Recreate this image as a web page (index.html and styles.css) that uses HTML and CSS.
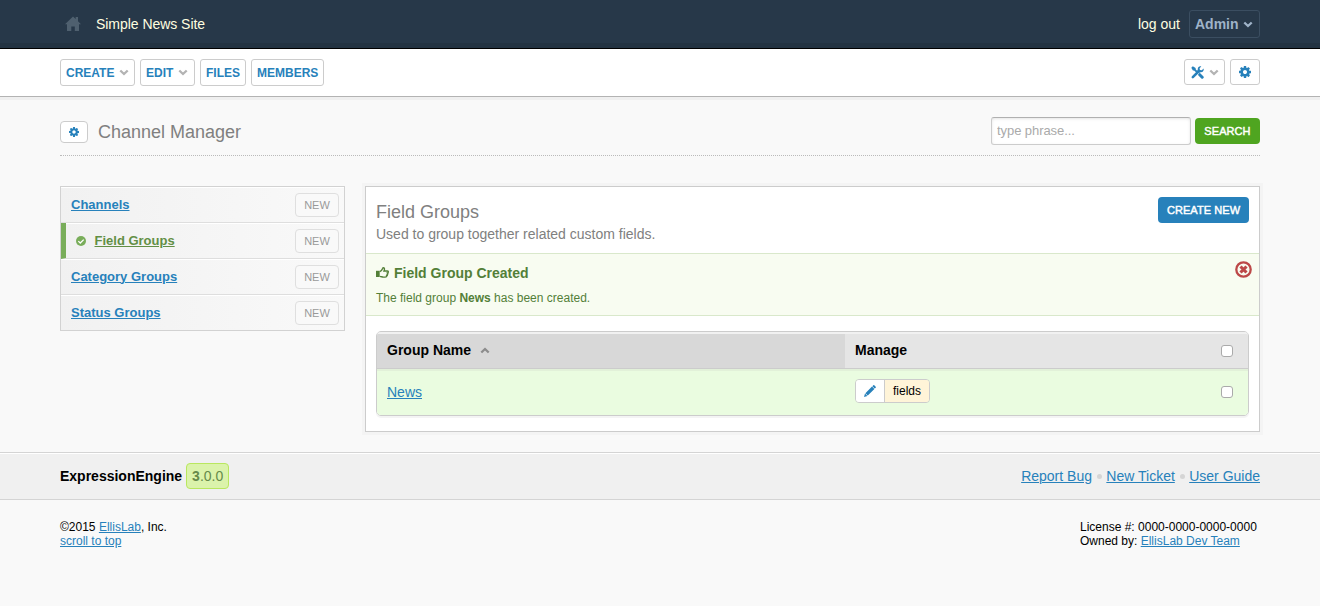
FILE: index.html
```html
<!DOCTYPE html>
<html lang="en">
<head>
<meta charset="utf-8">
<title>Channel Manager</title>
<link rel="stylesheet" href="styles.css">
</head>
<body>
<svg class="defs" width="0" height="0" aria-hidden="true">
  <symbol id="cog" viewBox="128 128 1536 1536"><path d="M1152 896q0-106-75-181t-181-75-181 75-75 181 75 181 181 75 181-75 75-181zm512-109v222q0 12-8 23t-20 13l-185 28q-19 54-39 91 35 50 107 138 10 12 10 25t-9 23q-27 37-99 108t-94 71q-12 0-26-9l-138-108q-44 23-91 38-16 136-29 186-7 28-36 28h-222q-14 0-24.500-8.500t-11.500-21.500l-28-184q-49-16-90-37l-141 107q-10 9-25 9-14 0-25-11-126-114-165-168-7-10-7-23 0-12 8-23 15-21 51-66.500t54-70.500q-27-50-41-99l-183-27q-13-2-21-12.500t-8-23.500v-222q0-12 8-23t19-13l186-28q14-46 39-92-40-57-107-138-10-12-10-24 0-10 9-23 26-36 98.500-107.500t94.500-71.500q13 0 26 10l138 107q44-23 91-38 16-136 29-186 7-28 36-28h222q14 0 24.500 8.500t11.500 21.500l28 184q49 16 90 37l142-107q9-9 24-9 13 0 25 10 129 119 165 170 7 8 7 22 0 12-8 23-15 21-51 66.500t-54 70.500q26 50 41 98l183 28q13 2 21 12.500t8 23.500z"/></symbol>
  <symbol id="chevron" viewBox="0 0 10 7"><path d="M1.300 1.500 5 5 8.700 1.500" fill="none" stroke="currentColor" stroke-width="2.300"/></symbol>
</svg>

<header class="topbar">
  <div class="wrap bar">
    <a class="home"><svg width="16" height="16" viewBox="0 0 16 16"><path d="M8 .5 10.700 3V1h2.300v4.200L16 8.300h-2V15H9.800v-4.500H6.300V15H2V8.300H0z"/></svg></a>
    <a class="site">Simple News Site</a>
    <a class="logout">log out</a>
    <a class="admin">Admin <svg width="10" height="7"><use href="#chevron"/></svg></a>
  </div>
</header>

<nav class="nav">
  <div class="wrap nav-row">
    <a class="btn create">CREATE <svg width="10" height="7"><use href="#chevron"/></svg></a>
    <a class="btn edit">EDIT <svg width="10" height="7"><use href="#chevron"/></svg></a>
    <a class="btn files">FILES</a>
    <a class="btn members">MEMBERS</a>
    <a class="btn tools"><svg class="blue" width="13" height="13" viewBox="0 0 13 13"><path d="M1.800 11.200 8 5" stroke="currentColor" stroke-width="2.500" stroke-linecap="round"/><path d="M12.600 2.600 10.800 4.300 8.900 3.900 8.600 2.200 10.300.4C8.300-.2 6.500 1.300 6.800 3.500L6.200 5 8 6.800l1.500-.6c2.200.3 3.600-1.600 3.100-3.600z"/><path d="M2.600 2.600 7 7" stroke="currentColor" stroke-width="1.800"/><path d="M.3 1.700 1.800.2 4.600 1.900v1.500L3.400 4.600H1.900z"/><path d="m8.700 8.700 2.500 2.500" stroke="currentColor" stroke-width="3" stroke-linecap="round"/></svg><svg width="10" height="7"><use href="#chevron"/></svg></a>
    <a class="btn gear"><svg class="blue" width="12" height="12"><use href="#cog"/></svg></a>
  </div>
</nav>

<main class="wrap">
  <div class="page-head">
    <a class="btn small-gear"><svg class="blue" width="10" height="10"><use href="#cog"/></svg></a>
    <h1>Channel Manager</h1>
    <form class="search">
      <input type="text" placeholder="type phrase...">
      <button type="button" class="solid green">SEARCH</button>
    </form>
  </div>

  <div class="columns">
    <ul class="side">
      <li><a class="link">Channels</a><a class="new">NEW</a></li>
      <li class="active"><svg width="10" height="10" viewBox="0 0 10 10"><circle cx="5" cy="5" r="5"/><path d="M2.300 5.100 4.300 7 7.700 3.600" fill="none" stroke="#fff" stroke-width="1.300"/></svg><a class="link">Field Groups</a><a class="new">NEW</a></li>
      <li><a class="link">Category Groups</a><a class="new">NEW</a></li>
      <li><a class="link">Status Groups</a><a class="new">NEW</a></li>
    </ul>

    <section class="panel">
      <div class="panel-head">
        <div>
          <h2>Field Groups</h2>
          <p>Used to group together related custom fields.</p>
        </div>
        <a class="solid primary">CREATE NEW</a>
      </div>
      <div class="alert">
        <div>
          <h3><svg width="13" height="12" viewBox="0 0 13 12"><path d="M0 3.800h3.700v6.200H0z"/><path d="M3.800 4.700C5.600 4 6.200 2.600 6.600 1.500 6.800.8 7 .7 7.500.7c1.300 0 1.100 1.900.5 3.300h3.200c1.500 0 1.400 1.700.3 2 .7.500.4 1.400-.3 1.500.4.700 0 1.200-.6 1.300.2.900-.4 1.300-1.500 1.300H7.500c-1.300 0-2-.5-3.600-.7" fill="none" stroke="currentColor" stroke-width="1.400"/></svg>Field Group Created</h3>
          <p>The field group <b>News</b> has been created.</p>
        </div>
        <svg class="close" width="17" height="17" viewBox="0 0 17 17"><circle cx="8.500" cy="8.500" r="7.200" fill="none" stroke="currentColor" stroke-width="2.300"/><path d="m5.500 5.500 6 6m0-6-6 6" stroke="currentColor" stroke-width="3.100"/></svg>
      </div>
      <div class="table">
        <div class="tr head">
          <div class="td name">Group Name <svg width="10" height="7" viewBox="0 0 10 7"><path d="M1.300 5.500 5 2 8.700 5.500" fill="none" stroke="currentColor" stroke-width="2.300"/></svg></div>
          <div class="td manage">Manage</div>
          <div class="td check"><i class="box"></i></div>
        </div>
        <div class="tr row">
          <div class="td name"><a class="link">News</a></div>
          <div class="td manage"><span class="tool"><span class="pen"><svg width="12" height="12" viewBox="0 0 12 12"><path d="M0 12 1 8.600 3.400 11zM1.400 8.200 8 1.600 10.400 4 3.800 10.600zM8.400 1.200 9.300.3q.5-.4 1 0l1.400 1.400q.4.500 0 1l-.9.900z"/></svg></span><span class="fields">fields</span></span></div>
          <div class="td check"><i class="box"></i></div>
        </div>
      </div>
    </section>
  </div>
</main>

<div class="product">
  <div class="wrap product-row">
    <b>ExpressionEngine</b><span class="version"><b>3</b>.0.0</span>
    <div class="help"><a class="link">Report Bug</a><i class="dot"></i><a class="link">New Ticket</a><i class="dot"></i><a class="link">User Guide</a></div>
  </div>
</div>
<footer class="wrap legal">
  <div>©2015 <a class="link">EllisLab</a>, Inc.<br><a class="link">scroll to top</a></div>
  <div class="license">License #: 0000-0000-0000-0000<br>Owned by: <a class="link">EllisLab Dev Team</a></div>
</footer>
</body>
</html>
```
FILE: styles.css
```css
* { box-sizing: border-box; }
body { margin: 0; background: #f9f9f9; color: #000; font: 14px/18px "Liberation Sans", Arial, sans-serif; }
h1, h2, h3, p, ul { margin: 0; padding: 0; font-weight: normal; }
svg { display: block; fill: currentColor; flex: none; }
.defs { position: absolute; }
.wrap { width: 1200px; margin: 0 auto; }
.link { color: #2781bb; text-decoration: underline; text-underline-offset: 1px; text-decoration-thickness: 1px; }

.topbar { height: 49px; background: #273849; border-bottom: 1px solid #000; box-shadow: inset 0 -5px 0 #233342; }
.bar { display: flex; align-items: center; height: 48px; color: #ffffe0; }
.home { color: #4f606f; margin: 0 15px 0 5px; }
.site { letter-spacing: -.04px; }
.logout { margin-left: auto; margin-right: 9px; }
.admin { display: flex; align-items: center; justify-content: space-between; width: 71px; height: 28px; padding: 0 6px 0 5px; border: 1px solid #3b4e61; border-radius: 3px; color: #9fb3c8; font-weight: bold; }

.nav { height: 51px; background: #fff; border-bottom: 3px solid #efefef; box-shadow: inset 0 -1px 0 #b3b3b3; }
.nav-row { display: flex; gap: 5px; padding-top: 10px; }
.btn { display: flex; align-items: center; justify-content: space-between; height: 27px; padding: 0 5px; border: 1px solid #ccc; border-radius: 3px; background: #fff; color: #2781bb; font-size: 12px; font-weight: bold; white-space: nowrap; }
.btn svg { color: #b3b3b3; }
.btn svg.blue { color: #2781bb; }
.create { width: 75px; }
.edit { width: 55px; padding-right: 6px; }
.files { width: 46px; }
.members { width: 73px; }
.tools { width: 41px; height: 26px; margin-left: auto; padding-left: 6px; }
.gear { width: 30px; height: 26px; justify-content: center; }

.page-head { display: flex; align-items: center; height: 56px; border-bottom: 1px dotted #bbb; padding-top: 8px; }
.small-gear { width: 28px; height: 22px; border-radius: 4px; justify-content: center; margin-right: 10px; }
h1 { font-size: 18px; color: #808080; }
.search { display: flex; align-items: center; gap: 4px; margin: -1px 0 0 auto; }
.search input { width: 200px; height: 28px; padding: 0 5px 1px; border: 1px solid #ccc; border-top-color: #b0b0b0; border-radius: 3px; background: #fff; box-shadow: inset 0 1px 3px #e5e5e5; font: 13px "Liberation Sans", Arial, sans-serif; }
.search input::placeholder { color: #aaa; letter-spacing: -.07px; }
.solid { display: flex; align-items: center; justify-content: center; height: 26px; padding: 0 0 1px; border: 0; border-radius: 4px; color: #fff; font: 11px "Liberation Sans", Arial, sans-serif; letter-spacing: .07px; -webkit-text-stroke: .45px #fff; }
.green { width: 65px; background: #4fa520; }
.primary { width: 91px; background: #2781bb; }

.columns { display: flex; align-items: flex-start; gap: 20px; padding-top: 30px; }
.side { width: 285px; border: 1px solid #d2d2d2; list-style: none; }
.side li { display: flex; align-items: center; height: 36px; padding: 0 5px 0 10px; background: linear-gradient(90deg, #f1f1f1, #f9f9f9); border-bottom: 1px solid #dedede; box-shadow: inset 0 1px 0 #fff; font-size: 13px; font-weight: bold; }
.side li:last-child { height: 35px; border-bottom: 0; }
.side .active { border-left: 5px solid #79ad5a; color: #79ad5a; }
.active svg { margin-right: 8.500px; }
.active .link { color: #628f45; }
.new { width: 44px; height: 24px; margin-left: auto; border: 1px solid #dfdfdf; border-radius: 4px; background: #f9f9f9; color: #999; font-size: 11px; font-weight: normal; line-height: 23px; text-align: center; }

.panel { width: 895px; height: 246px; border: 1px solid #ccc; background: #fff; box-shadow: 0 0 0 3px #f4f4f4; }
.panel-head { display: flex; justify-content: space-between; height: 66px; padding: 10px; color: #808080; }
h2 { font-size: 18px; line-height: 22px; padding-top: 4px; }
.panel-head p { line-height: 22px; }
.alert { display: flex; justify-content: space-between; height: 63px; padding: 8px 8px 0 10px; border: 1px solid #d9e8cb; border-width: 1px 0; background: #f8fcf1; color: #537f38; }
h3 { display: flex; align-items: center; gap: 5px; font-size: 14px; font-weight: bold; line-height: 22px; }
.alert p { padding-top: 5px; font-size: 12px; line-height: 18px; }
.close { color: #bc4848; margin: -1px -1px 0 0; }
.table { margin: 15px 10px 0; height: 85px; border: 1px solid #ccc; border-radius: 5px; overflow: hidden; box-shadow: 0 2px 0 #f4f4f4; }
.tr { display: grid; grid-template-columns: 468px 1fr 43px; }
.td { display: flex; align-items: center; padding: 0 10px; }
.head { height: 37px; border-bottom: 1px solid #ccc; font-weight: bold; }
.head .td { background: #e5e5e5; box-shadow: inset 0 2px 0 #f1f1f1; }
.head .name { background: #d8d8d8; gap: 9px; }
.head svg { color: #8c8c8c; }
.row { height: 46px; background: #eafce0; box-shadow: inset 0 2px 0 #e2f1d9; }
.box { width: 12px; height: 12px; margin-left: 6px; border: 1px solid #aaa; border-radius: 3px; background: #fff; }
.head .box { margin-top: 2px; }
.tool { display: flex; width: 75px; height: 24px; margin-top: -2px; border: 1px solid #ccc; border-radius: 4px; overflow: hidden; }
.pen { display: flex; align-items: center; justify-content: center; width: 29px; border-right: 1px solid #ccc; background: #fff; color: #2781bb; }
.fields { flex: 1; background: #fff4d8; font-size: 12px; line-height: 22px; text-align: center; }

.product { height: 48px; margin-top: 20px; border: 1px solid #d4d4d4; border-width: 1px 0; background: #f0f0f0; box-shadow: inset 0 1px 0 #fff; }
.product-row { display: flex; align-items: center; height: 46px; }
.version { width: 43px; height: 26px; margin-left: 4px; border: 1px solid #b9e75f; border-radius: 4px; background: #dbf3ab; color: #668a4a; line-height: 25px; text-align: center; }
.help { display: flex; align-items: center; margin-left: auto; }
.dot { width: 5px; height: 5px; margin: 0 4.700px; border-radius: 50%; background: #d5d5d5; }
.legal { display: flex; justify-content: space-between; padding-top: 20px; font-size: 12px; line-height: 14px; }
.license { width: 180px; white-space: nowrap; }
```
